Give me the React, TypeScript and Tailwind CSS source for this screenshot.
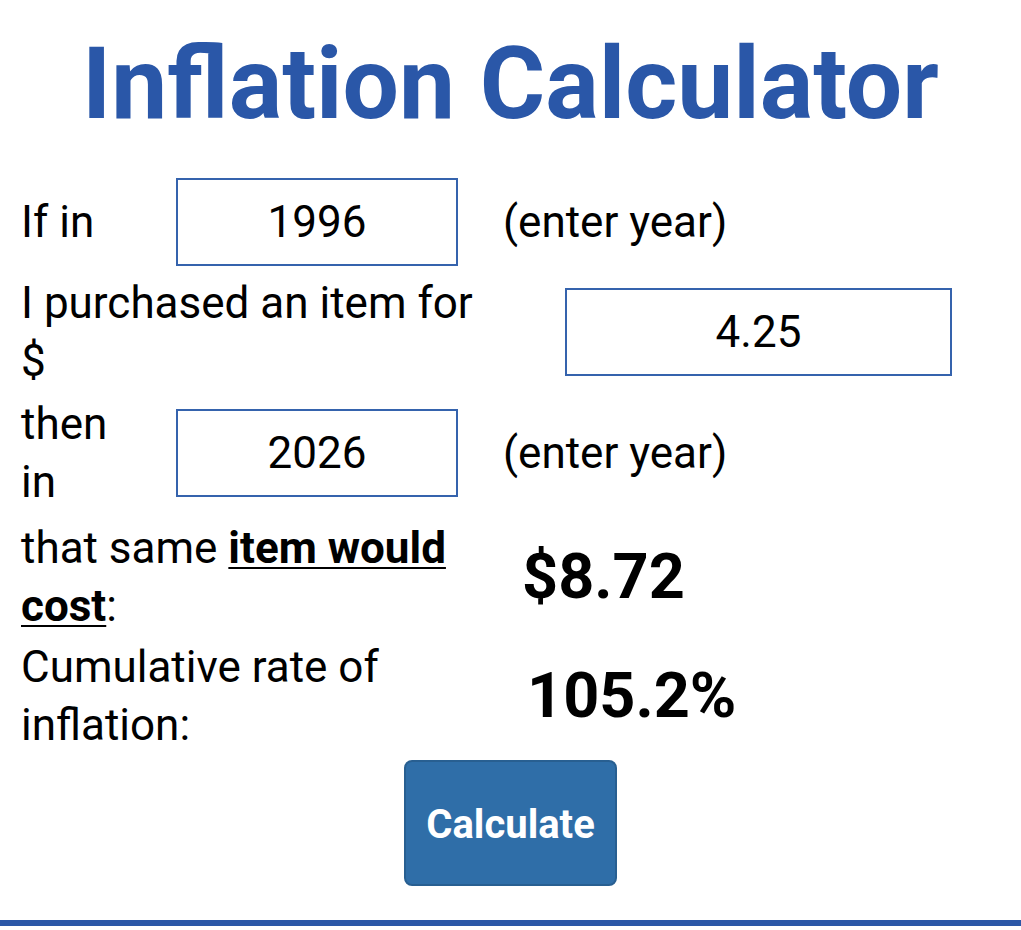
import React, { useState } from 'react';

const App: React.FC = () => {
  const [startYear, setStartYear] = useState('1996');
  const [amount, setAmount] = useState('4.25');
  const [endYear, setEndYear] = useState('2026');

  const inputClass =
    'h-[88px] border-2 border-[#3563ad] bg-white text-center text-[44px] text-black outline-none';

  return (
    <div className="min-h-[930px] bg-white font-['Roboto','Liberation_Sans',sans-serif] text-black">
      <h1 className="pt-[26px] text-center text-[100px] font-bold leading-[115px] text-[#2a57a8]">
        Inflation Calculator
      </h1>

      <div className="mt-[37px] flex flex-col px-[21px] text-[44px] leading-[58px]">
        {/* start year */}
        <div className="flex items-center">
          <div className="w-[155px]">If in</div>
          <input
            className={`${inputClass} w-[282px]`}
            value={startYear}
            onChange={e => setStartYear(e.target.value)}
          />
          <div className="ml-[45px]">(enter year)</div>
        </div>

        {/* amount */}
        <div className="mt-[8px] flex items-center">
          <div className="w-[470px]">I purchased an item for $</div>
          <input
            className={`${inputClass} ml-[74px] w-[387px]`}
            value={amount}
            onChange={e => setAmount(e.target.value)}
          />
        </div>

        {/* end year */}
        <div className="mt-[5px] flex items-center">
          <div className="w-[110px]">then in</div>
          <input
            className={`${inputClass} ml-[45px] w-[282px]`}
            value={endYear}
            onChange={e => setEndYear(e.target.value)}
          />
          <div className="ml-[45px]">(enter year)</div>
        </div>

        {/* results */}
        <div className="mt-[8px] flex items-center">
          <div className="w-[440px]">
            that same{' '}
            <span className="font-bold underline decoration-2 underline-offset-[4px]">item would cost</span>:
          </div>
          <div className="ml-[61px] text-[63px] font-bold">$8.72</div>
        </div>

        <div className="mt-[3px] flex items-center">
          <div className="w-[440px]">Cumulative rate of inflation:</div>
          <div className="ml-[66px] text-[63px] font-bold">105.2%</div>
        </div>
      </div>

      <div className="mt-[6px] flex justify-center">
        <button className="h-[126px] w-[213px] rounded-[8px] border-2 border-[#285f91] bg-[#2f6ea8] pt-[4px] text-[40px] font-bold text-white">
          Calculate
        </button>
      </div>

      <div className="mt-[34px] h-[6px] w-full bg-[#2b57a7]" />
    </div>
  );
};

export default App;
